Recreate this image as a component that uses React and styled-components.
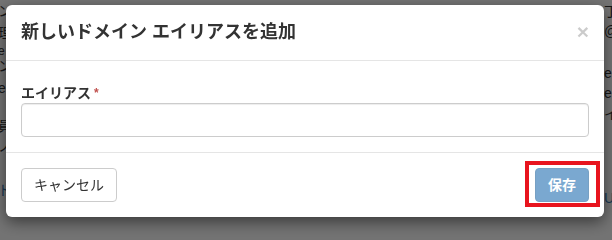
import React from "react";
import styled, { createGlobalStyle } from "styled-components";

const GlobalStyle = createGlobalStyle`
  html, body {
    margin: 0;
    padding: 0;
    width: 612px;
    height: 226px;
    overflow: hidden;
    background: #fff;
    font-family: "Liberation Sans", "Noto Sans CJK JP", sans-serif;
    font-size: 14px;
    line-height: 1.42857;
    color: #333;
  }
  * { box-sizing: border-box; }
`;

// page behind the modal, only the edges show through
const Page = styled.div`
  display: flex;
  justify-content: space-between;
  width: 612px;
  height: 226px;
  background: #fff;
`;

const EdgeColumn = styled.div`
  display: flex;
  flex-direction: column;
  width: 8px;
  overflow: hidden;
  padding-top: 2px;
`;

const Fragment = styled.span`
  display: block;
  height: ${(p) => p.h}px;
  line-height: ${(p) => Math.min(p.h, 18)}px;
  font-size: ${(p) => (p.h < 14 ? 12 : 14)}px;
  overflow: hidden;
  white-space: nowrap;
  color: ${(p) => (p.link ? "#337ab7" : "#333")};
  margin-left: ${(p) => p.shift || 0}px;
`;

const Backdrop = styled.div`
  position: fixed;
  inset: 0;
  background: rgba(0, 0, 0, 0.55);
`;

const Dialog = styled.div`
  position: fixed;
  top: 5px;
  left: 6px;
  width: 598px;
  background: #fff;
  border-radius: 6px;
  box-shadow: 0 5px 15px rgba(0, 0, 0, 0.5);
  display: flex;
  flex-direction: column;
`;

const Header = styled.div`
  display: flex;
  align-items: center;
  justify-content: space-between;
  padding: 15px;
  border-bottom: 1px solid #e5e5e5;
`;

const Title = styled.h4`
  margin: 0;
  font-size: 18px;
  font-weight: bold;
  line-height: 25px;
  color: #333;
`;

const Close = styled.button`
  border: 0;
  background: transparent;
  padding: 0;
  margin-top: -2px;
  font-family: "Liberation Sans", sans-serif;
  font-size: 21px;
  font-weight: bold;
  line-height: 1;
  color: #000;
  opacity: 0.2;
  cursor: pointer;
`;

const Body = styled.div`
  padding: 22px 15px 15px;
`;

const Label = styled.label`
  display: block;
  font-weight: bold;
  line-height: 20px;
`;

const Required = styled.span`
  color: #c0504d;
  margin-left: 3px;
  font-size: 12px;
  vertical-align: top;
`;

const Input = styled.input`
  display: block;
  width: 100%;
  height: 34px;
  padding: 6px 12px;
  border: 1px solid #ccc;
  border-radius: 4px;
  box-shadow: inset 0 1px 1px rgba(0, 0, 0, 0.075);
  font: inherit;
  color: #555;
  outline: none;
`;

const Footer = styled.div`
  display: flex;
  justify-content: space-between;
  align-items: center;
  padding: 15px;
  border-top: 1px solid #e5e5e5;
`;

const Button = styled.button`
  height: 34px;
  padding: 6px 12px;
  border-radius: 4px;
  font-family: "Liberation Sans", "Noto Sans CJK JP", sans-serif;
  font-size: 14px;
  line-height: 20px;
  border: 1px solid ${(p) => (p.primary ? "#2e6da4" : "#ccc")};
  background: ${(p) => (p.primary ? "#337ab7" : "#fff")};
  color: ${(p) => (p.primary ? "#fff" : "#333")};
  font-weight: ${(p) => (p.primary ? 600 : 400)};
  opacity: ${(p) => (p.disabled ? 0.65 : 1)};
`;

// red annotation frame drawn over the save button
const Highlight = styled.div`
  position: relative;
  display: flex;

  &::after {
    content: "";
    position: absolute;
    top: -7px;
    bottom: -5px;
    left: -10px;
    right: -11px;
    border: 4px solid #e8141e;
    pointer-events: none;
  }
`;

const leftBits = [
  { t: "ン", h: 22 },
  { t: "理", h: 21 },
  { t: "e", h: 12 },
  { t: "ン", h: 22 },
  { t: "e", h: 38 },
  { t: "員", h: 20 },
  { t: "ノ", h: 44 },
  { t: "ド", h: 20, link: true },
];

const rightBits = [
  { t: "丁", h: 20 },
  { t: "@", h: 42 },
  { t: "er", h: 20 },
  { t: "e", h: 21 },
  { t: "イ", h: 84 },
  { t: "U", h: 20, link: true },
];

export default function App() {
  return (
    <>
      <GlobalStyle />
      <Page>
        <EdgeColumn>
          {leftBits.map((b, i) => (
            <Fragment key={i} h={b.h} link={b.link} shift={-2}>
              {b.t}
            </Fragment>
          ))}
        </EdgeColumn>
        <EdgeColumn>
          {rightBits.map((b, i) => (
            <Fragment key={i} h={b.h} link={b.link} shift={0}>
              {b.t}
            </Fragment>
          ))}
        </EdgeColumn>
      </Page>
      <Backdrop />
      <Dialog role="dialog">
        <Header>
          <Title>新しいドメイン エイリアスを追加</Title>
          <Close aria-label="Close">×</Close>
        </Header>
        <Body>
          <Label htmlFor="alias">
            エイリアス<Required>*</Required>
          </Label>
          <Input id="alias" type="text" />
        </Body>
        <Footer>
          <Button>キャンセル</Button>
          <Highlight>
            <Button primary disabled>
              保存
            </Button>
          </Highlight>
        </Footer>
      </Dialog>
    </>
  );
}
